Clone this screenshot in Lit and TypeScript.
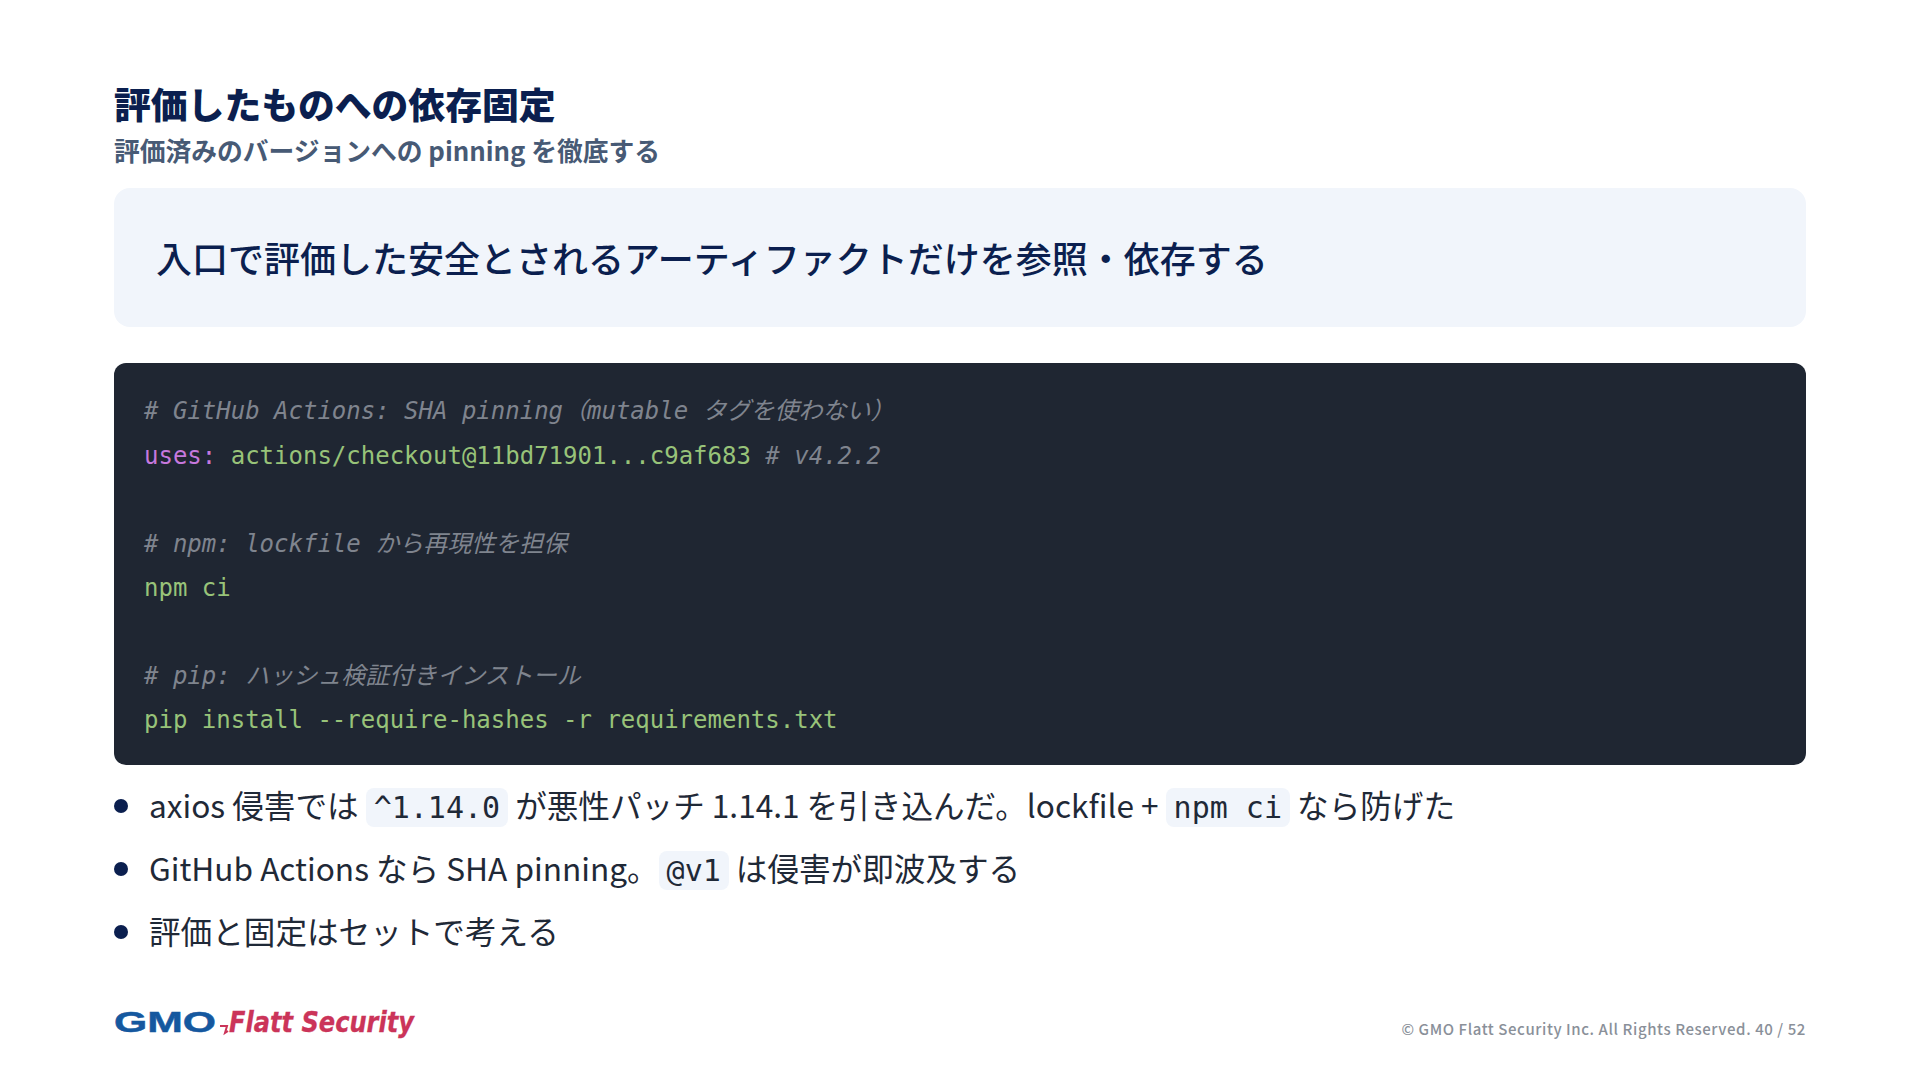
import { LitElement, html, css } from "lit";
import { customElement } from "lit/decorators.js";

@customElement("app-root")
export class AppRoot extends LitElement {
  static styles = css`
    :host { display: block; width: 1920px; height: 1080px; background: #fff; overflow: hidden;
      font-family: "Noto Sans CJK JP", "Noto Sans", sans-serif; color: #1f2937; }
    .slide { box-sizing: border-box; width: 1920px; height: 1080px; padding: 78px 114px 0; display: flex; flex-direction: column; }
    h1 { margin: 0; font-size: 36.8px; line-height: 50px; font-weight: 900; color: #0b1f4f; }
    .sub { font-size: 25.76px; line-height: 38px; font-weight: 700; color: #475a75; margin-top: 3px; }
    .callout { margin-top: 19px; height: 139px; box-sizing: border-box; background: #f1f5fb; border-radius: 16px;
      padding: 0 42px 2px; display: flex; align-items: center; font-size: 36px; font-weight: 500; color: #0b1f4f; }
    pre { margin: 36px 0 0; box-sizing: border-box; height: 402px; background: #1f2632; border-radius: 12px; padding: 26px 30px;
      font-family: "DejaVu Sans Mono", "Noto Sans CJK JP", monospace; font-size: 24px; line-height: 44px; color: #98c379; }
    .line { display: block; height: 44px; white-space: pre; }
    .line:first-child { height: 45px; }
    .c { color: #7f848e; font-style: italic; }
    .k { color: #c678dd; }
    ul { list-style: none; margin: 7px 0 0; padding: 0; font-size: 31.6px; color: #1f2937; }
    li { height: 63px; display: flex; align-items: center; white-space: pre; position: relative; padding-left: 35px; }
    li::before { content: ""; position: absolute; left: 0; top: 27px; width: 14px; height: 14px; border-radius: 50%; background: #0b1f4f; }
    code { font-family: "DejaVu Sans Mono", monospace; font-size: 30px; background: #f1f5fb; border-radius: 8px; padding: 2px 8px; color: #1f2937; }
    .footer { margin-top: auto; height: 80px; display: flex; justify-content: space-between; align-items: flex-start; }
    .logo { display: block; margin-top: 2px; }
    .copy { font-size: 15px; font-weight: 500; color: #8a9099; margin-top: 18px; letter-spacing: 0.58px; }
    .gmo { font-family: "Liberation Sans", sans-serif; font-weight: 700; font-size: 30px; fill: #15589f; stroke: #15589f; stroke-width: 0.5px; }
    .fs { font-family: "DejaVu Sans", sans-serif; font-weight: 700; font-style: italic; font-size: 28px; fill: #cb3459; stroke: #cb3459; stroke-width: 0.3px; }
    .tick { fill: none; stroke: #cb3459; stroke-width: 2px; }
  `;
  render() {
    return html`<div class="slide">
      <h1>評価したものへの依存固定</h1>
      <div class="sub">評価済みのバージョンへの pinning を徹底する</div>
      <div class="callout">入口で評価した安全とされるアーティファクトだけを参照・依存する</div>
      <pre><span class="line c"># GitHub Actions: SHA pinning（mutable タグを使わない）</span><span class="line"><span class="k">uses:</span> actions/checkout@11bd71901...c9af683 <span class="c"># v4.2.2</span></span><span class="line"> </span><span class="line c"># npm: lockfile から再現性を担保</span><span class="line">npm ci</span><span class="line"> </span><span class="line c"># pip: ハッシュ検証付きインストール</span><span class="line">pip install --require-hashes -r requirements.txt</span></pre>
      <ul>
        <li><span>axios 侵害では <code>^1.14.0</code> が悪性パッチ 1.14.1 を引き込んだ。lockfile + <code>npm ci</code> なら防げた</span></li>
        <li><span>GitHub Actions なら SHA pinning。<code>@v1</code> は侵害が即波及する</span></li>
        <li><span>評価と固定はセットで考える</span></li>
      </ul>
      <div class="footer">
        <svg class="logo" width="340" height="44" viewBox="0 0 340 44">
          <text class="gmo" x="0" y="30" textLength="102" lengthAdjust="spacingAndGlyphs">GMO</text>
          <path class="tick" d="M106 24 h7 l-2 7 l3 -2"/>
          <text class="fs" x="115" y="30" textLength="185" lengthAdjust="spacingAndGlyphs">Flatt Security</text>
        </svg>
        <div class="copy">© GMO Flatt Security Inc. All Rights Reserved. 40 / 52</div>
      </div>
    </div>`;
  }
}
